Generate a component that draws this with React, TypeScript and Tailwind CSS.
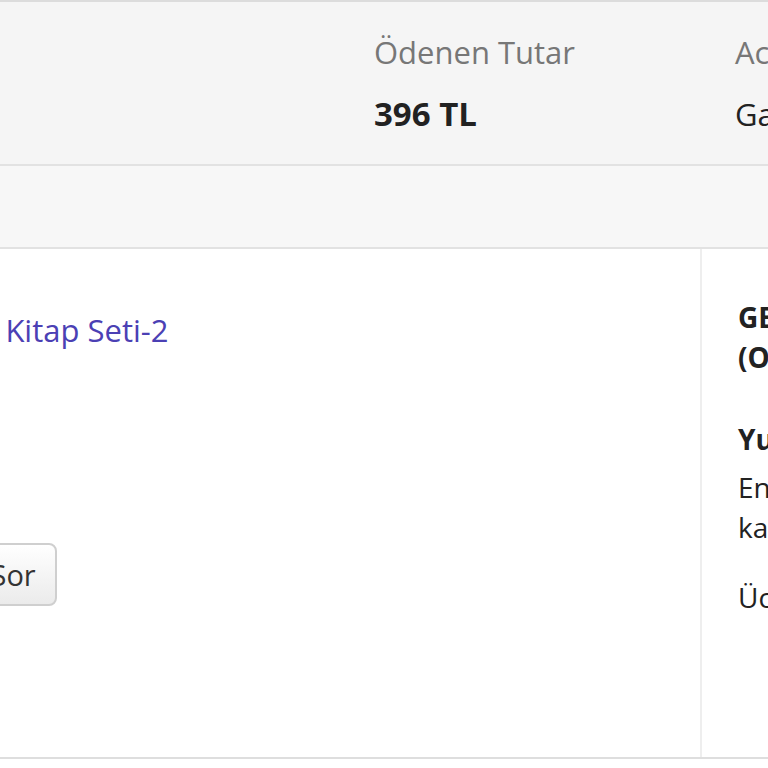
import React from 'react';

const summary = [
  { label: 'Ödenen Tutar', value: '396 TL', bold: true },
  { label: 'Acente', value: 'Garanti Bankası', bold: false },
];

export default function App() {
  return (
    <div className="min-h-screen w-full overflow-hidden bg-white font-['Open_Sans',sans-serif] text-[#222]">
      {/* order summary strip */}
      <div className="flex h-[166px] w-max border-y-2 border-t-[#dcdcdc] border-b-[#e2e2e2] bg-[#f5f5f5] pl-[374px] pt-[29px]">
        {summary.map((item) => (
          <div key={item.label} className="w-[361px] shrink-0">
            <p className="text-[31px] leading-[42px] text-[#777]">{item.label}</p>
            <p className={item.bold ? 'mt-[20px] text-[33px] font-bold leading-[42px] text-[#222]' : 'mt-[20px] text-[31px] leading-[42px] text-[#222]'}>
              {item.value}
            </p>
          </div>
        ))}
      </div>

      {/* status strip */}
      <div className="h-[83px] border-b-2 border-[#e2e2e2] bg-[#f7f7f7]" />

      {/* order line */}
      <div className="flex h-[510px] border-b-2 border-[#dedede]">
        <div className="flex w-[702px] shrink-0 flex-col border-r-2 border-[#eeeeee] pt-[60px]">
          <a href="#" className="-ml-[91px] text-[31px] leading-[42px] text-[#4b40b4]">
            Çocuk Kitap Seti-2
          </a>
          <div className="mt-[192px]">
            <button className="-ml-[106px] h-[63px] rounded-[8px] border-2 border-[#cfcfcf] bg-gradient-to-b from-white to-[#ebebeb] pl-[24px] pr-[19px] text-[29px] text-[#333]">
              Soru Sor
            </button>
          </div>
        </div>

        <div className="w-[420px] shrink-0 pl-[36px] pt-[48px] text-[28px] leading-[40px]">
          <p className="font-bold">GERİ ÖDEME</p>
          <p className="font-bold">(ONAYLANDI)</p>
          <p className="mt-[42px] font-bold">Yurtiçi Kargo</p>
          <p className="mt-[8px]">En geç 3 iş günü içinde</p>
          <p>kargoya verilir.</p>
          <p className="mt-[30px]">Ücretsiz kargo</p>
        </div>
      </div>
    </div>
  );
}
